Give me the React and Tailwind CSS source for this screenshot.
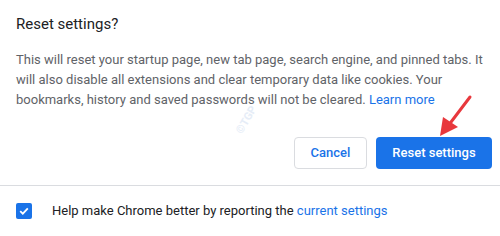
import React from 'react';

const App = () => {
  return (
    <div className="relative w-[500px] h-[236px] bg-white overflow-hidden" style={{ fontFamily: 'Roboto, "Liberation Sans", sans-serif' }}>
      <div className="px-4 pt-[14px]">
        <h2 className="text-[15px] leading-[20px] text-[#202124] font-normal">Reset settings?</h2>
        <p className="mt-4 text-[13px] leading-[20px] text-[#5f6368] -mr-2">
          This will reset your startup page, new tab page, search engine, and pinned tabs. It will also disable all extensions and clear temporary data like cookies. Your bookmarks, history and saved passwords will not be cleared.{' '}
          <span className="text-[#1a73e8]">Learn more</span>
        </p>
      </div>

      <div className="flex justify-end gap-[9px] pr-2 mt-[27px]">
        <button className="w-[73px] h-8 rounded border border-[#dadce0] bg-white text-[13px] font-medium text-[#1a73e8]">
          Cancel
        </button>
        <button className="w-[116px] h-8 rounded bg-[#1a73e8] text-[13px] font-medium text-white">
          Reset settings
        </button>
      </div>

      <div className="mt-4 border-t border-[#dadce0]" />

      <div className="flex items-center px-4 h-[52px] pb-[2px]">
        <div className="w-4 h-4 rounded-[2px] bg-[#1a73e8] flex items-center justify-center">
          <svg width="12" height="12" viewBox="0 0 12 12">
            <path d="M2.2 6.2 L4.8 8.7 L9.8 3.4" fill="none" stroke="white" strokeWidth="1.8" />
          </svg>
        </div>
        <span className="ml-5 text-[13px] text-[#202124]">
          Help make Chrome better by reporting the <span className="text-[#1a73e8]">current settings</span>
        </span>
      </div>

      {/* watermark */}
      <div className="absolute left-[232px] top-[112px] -rotate-[60deg] text-[11px] font-bold text-[#e6edf7] pointer-events-none">
        ©TGP
      </div>

      {/* red arrow */}
      <svg className="absolute left-0 top-0 pointer-events-none" width="500" height="236">
        <line x1="470" y1="97" x2="448" y2="126" stroke="#e8383d" strokeWidth="3" strokeLinecap="round" />
        <polygon points="440,136 443,117 458,127" fill="#e8383d" />
      </svg>
    </div>
  );
};

export default App;
